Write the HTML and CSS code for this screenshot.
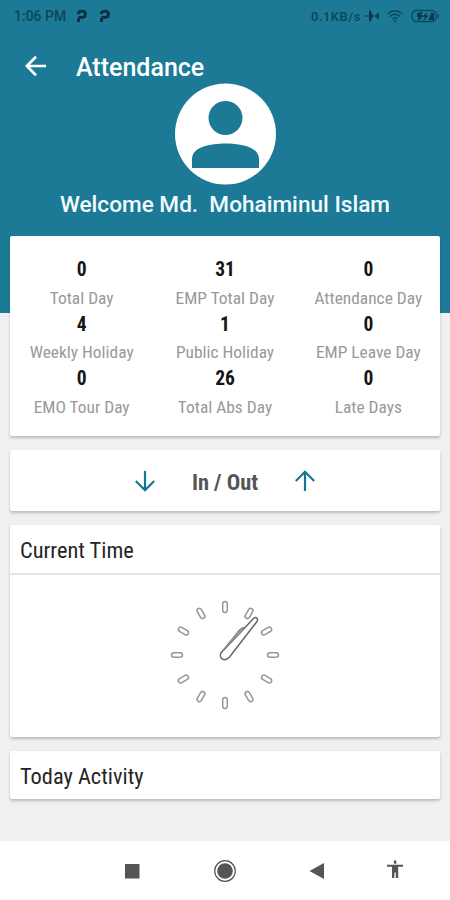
FILE: index.html
```html
<!DOCTYPE html>
<html lang="en">
<head>
<meta charset="utf-8">
<title>Attendance</title>
<link rel="stylesheet" href="styles.css">
</head>
<body>
<main class="screen">
  <header class="hero">
    <div class="status">
      <span class="status-time">1:06 PM</span>
      <svg class="p-icon" viewBox="0 0 12 14"><path d="M2.500 13V9M2 5Q2.500 2.200 5.800 2.200Q9.500 2.200 9.500 5.200Q9.500 8.300 6 8.300H2.500"/></svg>
      <svg class="p-icon" viewBox="0 0 12 14"><path d="M2.500 13V9M2 5Q2.500 2.200 5.800 2.200Q9.500 2.200 9.500 5.200Q9.500 8.300 6 8.300H2.500"/></svg>
      <span class="status-rate">0.1KB/s</span>
      <svg class="plane" viewBox="0 0 16 14"><path class="solid" d="M0 6.400H5V1.500H6.500L9 6.400H12L13.500 4H14.700V10H13.500L12 7.600H9L6.500 12.500H5V7.600H0Z"/></svg>
      <svg class="wifi" viewBox="0 0 18 14"><path d="M1.500 5Q9-1.500 16.500 5M4 7.500Q9 3 14 7.500M6.500 10Q9 7.800 11.500 10M8 11.500L9 12.500L10 11.500"/></svg>
      <svg class="battery" viewBox="0 0 29 14"><rect x="1" y="1.500" width="24" height="11" rx="4.500"/><path class="solid" d="M6 4L12 3L10 6H12L9 11H6L8 8H6ZM16 3L11 8H14L12 12L18 6.500H15ZM20 4H23V11H17L19 8Z"/><path d="M27 5V9"/></svg>
    </div>
    <div class="toolbar">
      <svg class="back" viewBox="0 0 22 22"><path d="M21 11H2M11 1.800L1.800 11L11 20.200"/></svg>
      <h1>Attendance</h1>
    </div>
    <svg class="avatar" viewBox="0 0 102 102"><circle class="disc" cx="51.500" cy="51" r="50.500"/><circle class="person" cx="51.500" cy="35" r="17"/><path class="person" d="M18 85V76C18 64 36 60.500 51.500 60.500S85 64 85 76V85Z"/></svg>
    <p class="welcome">Welcome Md.&nbsp; Mohaiminul Islam</p>
  </header>

  <div class="cards">
    <section class="card stats">
      <div class="stat"><b>0</b><span>Total Day</span></div>
      <div class="stat"><b>31</b><span>EMP Total Day</span></div>
      <div class="stat"><b>0</b><span>Attendance Day</span></div>
      <div class="stat"><b>4</b><span>Weekly Holiday</span></div>
      <div class="stat"><b>1</b><span>Public Holiday</span></div>
      <div class="stat"><b>0</b><span>EMP Leave Day</span></div>
      <div class="stat"><b>0</b><span>EMO Tour Day</span></div>
      <div class="stat"><b>26</b><span>Total Abs Day</span></div>
      <div class="stat"><b>0</b><span>Late Days</span></div>
    </section>
    <section class="card punch">
      <svg class="arrow" viewBox="0 0 22 22"><path d="M11 1V20M1.800 11L11 20.200L20.200 11"/></svg>
      <b>In / Out</b>
      <svg class="arrow" viewBox="0 0 22 22"><path d="M11 21V2M1.800 11L11 1.800L20.200 11"/></svg>
    </section>
    <section class="card time">
      <h2>Current Time</h2>
      <div class="clock-area">
        <svg class="clock" viewBox="0 0 130 130">
          <defs><rect id="tick" x="62.700" y="11.500" width="4.600" height="11" rx="2.300"/></defs>
          <use href="#tick"/>
          <use href="#tick" transform="rotate(30 65 65)"/>
          <use href="#tick" transform="rotate(60 65 65)"/>
          <use href="#tick" transform="rotate(90 65 65)"/>
          <use href="#tick" transform="rotate(120 65 65)"/>
          <use href="#tick" transform="rotate(150 65 65)"/>
          <use href="#tick" transform="rotate(180 65 65)"/>
          <use href="#tick" transform="rotate(210 65 65)"/>
          <use href="#tick" transform="rotate(240 65 65)"/>
          <use href="#tick" transform="rotate(270 65 65)"/>
          <use href="#tick" transform="rotate(300 65 65)"/>
          <use href="#tick" transform="rotate(330 65 65)"/>
          <path class="hand" d="M61.300 62.500L93.500 28.500Q95.500 26.700 97 28.200Q98.200 29.500 96.800 31.800L69.500 67C64 73 58 67.500 61.300 62.500Z"/>
          <path class="hour" d="M61.500 62L79 40Q81.500 37 84.500 37.500L81 42.500Z"/>
        </svg>
      </div>
    </section>
    <section class="card activity"><h2>Today Activity</h2></section>
  </div>

  <nav class="nav">
    <svg viewBox="0 0 30 30"><rect x="8" y="8" width="14.500" height="14.500"/></svg>
    <svg viewBox="0 0 30 30"><circle class="ring" cx="15" cy="15" r="10.300"/><circle cx="15" cy="15" r="7.800"/></svg>
    <svg viewBox="0 0 30 30"><path d="M7.500 15L22 7V23Z"/></svg>
    <svg viewBox="0 0 30 30"><rect x="13.900" y="4.500" width="2.400" height="3.200"/><path d="M7 8.700H23V10.700H18.200V22H15.800V16.500H14.400V22H12V10.700H7Z"/></svg>
  </nav>
</main>
</body>
</html>
```
FILE: styles.css
```css
* { box-sizing: border-box; }
body { margin: 0; font-family: Roboto, "Liberation Sans", sans-serif; }
svg { display: block; flex: none; fill: none; }
h1, h2, p { margin: 0; }
.screen { width: 450px; height: 900px; display: flex; flex-direction: column; background: #f0f0f0; overflow: hidden; }

.hero { height: 313px; flex: none; background: #1c7a96; display: flex; flex-direction: column; align-items: center; }
.status { width: 100%; height: 32px; display: flex; align-items: center; padding: 0 10px 0 14px; color: #0d4659; font-size: 13px; font-weight: 500; }
.status svg { stroke: #0d4659; stroke-width: 1.3; }
.status-time { width: 53px; margin-right: 9px; font-size: 14px; white-space: nowrap; }
.status .p-icon { width: 12px; height: 14px; margin-right: 11px; stroke: #08303f; stroke-width: 2.8; }
.status-rate { margin-left: auto; letter-spacing: .5px; }
.plane { width: 16px; height: 14px; margin: 0 6px 0 3px; }
.wifi { width: 18px; height: 14px; margin-right: 7px; }
.battery { width: 29px; height: 14px; }
.status .solid { fill: #0a394a; stroke: none; }
.toolbar { width: 100%; height: 52px; display: flex; align-items: center; padding: 16px 25px 0; gap: 29px; }
.back { width: 22px; height: 22px; stroke: #fff; stroke-width: 2.7; }
h1 { padding-top: 3px; color: #fff; font-size: 25px; line-height: 30px; font-weight: 500; }
.avatar { width: 102px; height: 102px; margin-top: -1px; }
.disc { fill: #fff; }
.person { fill: #1c7a96; }
.welcome { margin-top: 6px; color: #f2fbff; font-size: 22.6px; line-height: 28px; font-weight: 500; white-space: nowrap; }

.cards { margin-top: -77px; padding: 0 10px; display: flex; flex-direction: column; }
.card { background: #fff; border-radius: 2px; box-shadow: 0 2px 3px rgba(0, 0, 0, .22); font-family: "Roboto Condensed", Roboto, sans-serif; font-stretch: 75%; }
.stats { height: 200px; padding: 21px 0 0; display: grid; grid-template-columns: repeat(3, 1fr); grid-auto-rows: 54.5px; }
.stat { display: flex; flex-direction: column; align-items: center; white-space: nowrap; }
.stat b { height: 28px; line-height: 26px; font-size: 19.5px; color: #151515; }
.stat span { line-height: 27px; font-size: 17.4px; color: #999; }
.punch { height: 61px; margin-top: 14px; display: flex; align-items: center; justify-content: center; gap: 36px; color: #555; font-size: 22.4px; }
.punch b { padding-top: 3px; }
.arrow { width: 22px; height: 22px; stroke: #137891; stroke-width: 2.2; }
.time { height: 212px; margin-top: 14px; }
h2 { height: 48px; padding: 2px 10px 0; color: #252525; font-size: 22.4px; line-height: 47px; font-weight: 400; white-space: nowrap; }
.clock-area { border-top: 2px solid #e4e4e4; height: 164px; display: flex; justify-content: center; padding-top: 15px; }
.clock { width: 130px; height: 130px; stroke: #959595; stroke-width: 1.5; }
.hand { fill: #fff; stroke: #666; }
.hour { fill: #999; stroke: #777; stroke-width: .8; }
.activity { height: 48px; margin-top: 14px; }
.nav { margin-top: auto; flex: none; height: 59px; background: #fff; display: grid; grid-template-columns: 93px 92px 78px 30px; align-items: center; padding-left: 117px; }
.nav svg { width: 30px; height: 30px; fill: #555; }
.nav .ring { fill: none; stroke: #555; stroke-width: 1.2; }
```
